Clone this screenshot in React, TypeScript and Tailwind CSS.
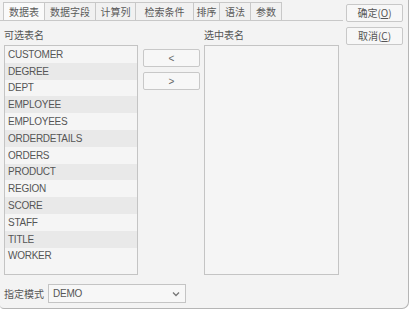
import React from "react";

const tabs = [
  { t: "数据表", w: 42 },
  { t: "数据字段", w: 51 },
  { t: "计算列", w: 40 },
  { t: "检索条件", w: 58 },
  { t: "排序", w: 26 },
  { t: "语法", w: 31 },
  { t: "参数", w: 31 },
];

const items = [
  "CUSTOMER",
  "DEGREE",
  "DEPT",
  "EMPLOYEE",
  "EMPLOYEES",
  "ORDERDETAILS",
  "ORDERS",
  "PRODUCT",
  "REGION",
  "SCORE",
  "STAFF",
  "TITLE",
  "WORKER",
];

const cjk = { fontFamily: '"Noto Sans CJK SC", "Liberation Sans", sans-serif' };
const lat = { fontFamily: '"Liberation Sans", Arial, sans-serif' };

export default function App() {
  return (
    <div
      className="w-[409px] h-[309px] bg-[#f3f3f3] border-r border-b border-[#b5b5b5] rounded-br-[7px] rounded-bl-[4px] flex text-[#555] overflow-hidden"
      style={cjk}
    >
      <div className="w-[343px] flex flex-col">
        <div className="h-[20px] flex items-end pl-[3px]">
          {tabs.map((tab, i) => (
            <div
              key={tab.t}
              style={{ width: tab.w }}
              className={
                "h-[18px] flex items-center justify-center text-[10px] leading-none text-[#5a5a5a] border-[#c8c8c8] " +
                (i === 0
                  ? "bg-[#fafafa] border-t border-l border-r"
                  : "bg-[#f1f1f1] border-t border-r")
              }
            >
              {tab.t}
            </div>
          ))}
        </div>
        <div className="flex-1 border-t border-[#c8c8c8] flex flex-col pl-[4px]">
          <div className="flex mt-[4px] h-[19px] items-center text-[10px] leading-none text-[#555]">
            <div className="w-[200px]">可选表名</div>
            <div>选中表名</div>
          </div>
          <div className="flex mt-[1px]">
            <div className="w-[134px] h-[230px] border border-[#c4c4c4] bg-[#f5f5f5]">
              {items.map((it, i) => (
                <div
                  key={it}
                  style={lat}
                  className={
                    "h-[16.8px] flex items-center pl-[3px] text-[10px] tracking-[-0.25px] text-[#555] " +
                    (i % 2 === 1 ? "bg-[#e9e9e9]" : "")
                  }
                >
                  {it}
                </div>
              ))}
            </div>
            <div className="w-[66px] flex flex-col pl-[5px] pt-[4px] gap-[5px]">
              <div
                style={lat}
                className="w-[57px] h-[18px] border border-[#c8c8c8] rounded-[2px] bg-[#f7f7f7] flex items-center justify-center text-[10px] text-[#666]"
              >
                &lt;
              </div>
              <div
                style={lat}
                className="w-[57px] h-[18px] border border-[#c8c8c8] rounded-[2px] bg-[#f7f7f7] flex items-center justify-center text-[10px] text-[#666]"
              >
                &gt;
              </div>
            </div>
            <div className="w-[135px] h-[230px] border border-[#c4c4c4] bg-[#f5f5f5]" />
          </div>
          <div className="flex items-center mt-[9px] h-[19px]">
            <div className="text-[10px] leading-none w-[44px] text-[#555]">指定模式</div>
            <div className="w-[138px] h-[19px] border border-[#c4c4c4] bg-[#f7f7f7] flex items-center justify-between pl-[4px] pr-[5px]">
              <span style={lat} className="text-[10px] tracking-[-0.2px] text-[#555]">
                DEMO
              </span>
              <svg width="8" height="6" viewBox="0 0 8 6">
                <path d="M1 1.5 L4 4.5 L7 1.5" fill="none" stroke="#777" strokeWidth="1.3" />
              </svg>
            </div>
          </div>
        </div>
      </div>
      <div className="flex flex-col pl-[3px] pt-[4px] gap-[5px]">
        <div className="w-[57px] h-[18px] border border-[#c8c8c8] rounded-[2px] bg-[#f7f7f7] flex items-center justify-center text-[10px] leading-none text-[#555]">
          确定(<span className="underline">O</span>)
        </div>
        <div className="w-[57px] h-[18px] border border-[#c8c8c8] rounded-[2px] bg-[#f7f7f7] flex items-center justify-center text-[10px] leading-none text-[#555]">
          取消(<span className="underline">C</span>)
        </div>
      </div>
    </div>
  );
}
